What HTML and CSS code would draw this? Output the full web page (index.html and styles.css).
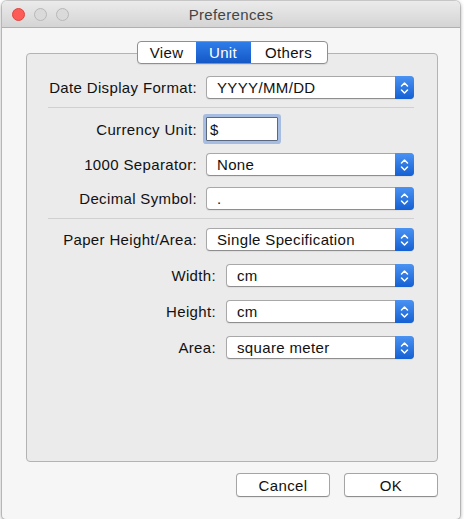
FILE: index.html
```html
<!DOCTYPE html>
<html>
<head>
<meta charset="utf-8">
<link rel="stylesheet" href="styles.css">
</head>
<body>
<div class="window">
  <div class="titlebar">
    <div class="lights"><span class="light red"></span><span class="light gray"></span><span class="light gray"></span></div>
    <div class="title">Preferences</div>
    <div></div>
  </div>
  <div class="body">
    <div class="tabs">
      <div class="tab t-view">View</div>
      <div class="tab t-unit active">Unit</div>
      <div class="tab t-others">Others</div>
    </div>
    <div class="group">
      <div class="row r-date">
        <label>Date Display Format:</label>
        <div class="popup"><span class="val">YYYY/MM/DD</span><span class="arrows"><svg width="19" height="23" viewBox="0 0 19 23"><path d="M6.5 10 L9.5 7 L12.5 10 M6.5 14 L9.5 17 L12.5 14" stroke="#fff" stroke-width="1.5" fill="none" stroke-linecap="round" stroke-linejoin="round"/></svg></span></div>
      </div>
      <div class="sep s1"></div>
      <div class="row r-cur">
        <label>Currency Unit:</label>
        <div class="field">$</div>
      </div>
      <div class="row r-thou">
        <label>1000 Separator:</label>
        <div class="popup"><span class="val">None</span><span class="arrows"><svg width="19" height="23" viewBox="0 0 19 23"><path d="M6.5 10 L9.5 7 L12.5 10 M6.5 14 L9.5 17 L12.5 14" stroke="#fff" stroke-width="1.5" fill="none" stroke-linecap="round" stroke-linejoin="round"/></svg></span></div>
      </div>
      <div class="row r-dec">
        <label>Decimal Symbol:</label>
        <div class="popup"><span class="val">.</span><span class="arrows"><svg width="19" height="23" viewBox="0 0 19 23"><path d="M6.5 10 L9.5 7 L12.5 10 M6.5 14 L9.5 17 L12.5 14" stroke="#fff" stroke-width="1.5" fill="none" stroke-linecap="round" stroke-linejoin="round"/></svg></span></div>
      </div>
      <div class="sep s2"></div>
      <div class="row r-paper">
        <label>Paper Height/Area:</label>
        <div class="popup"><span class="val">Single Specification</span><span class="arrows"><svg width="19" height="23" viewBox="0 0 19 23"><path d="M6.5 10 L9.5 7 L12.5 10 M6.5 14 L9.5 17 L12.5 14" stroke="#fff" stroke-width="1.5" fill="none" stroke-linecap="round" stroke-linejoin="round"/></svg></span></div>
      </div>
      <div class="row sub r-w">
        <label>Width:</label>
        <div class="popup"><span class="val">cm</span><span class="arrows"><svg width="19" height="23" viewBox="0 0 19 23"><path d="M6.5 10 L9.5 7 L12.5 10 M6.5 14 L9.5 17 L12.5 14" stroke="#fff" stroke-width="1.5" fill="none" stroke-linecap="round" stroke-linejoin="round"/></svg></span></div>
      </div>
      <div class="row sub r-h">
        <label>Height:</label>
        <div class="popup"><span class="val">cm</span><span class="arrows"><svg width="19" height="23" viewBox="0 0 19 23"><path d="M6.5 10 L9.5 7 L12.5 10 M6.5 14 L9.5 17 L12.5 14" stroke="#fff" stroke-width="1.5" fill="none" stroke-linecap="round" stroke-linejoin="round"/></svg></span></div>
      </div>
      <div class="row sub r-a">
        <label>Area:</label>
        <div class="popup"><span class="val">square meter</span><span class="arrows"><svg width="19" height="23" viewBox="0 0 19 23"><path d="M6.5 10 L9.5 7 L12.5 10 M6.5 14 L9.5 17 L12.5 14" stroke="#fff" stroke-width="1.5" fill="none" stroke-linecap="round" stroke-linejoin="round"/></svg></span></div>
      </div>
    </div>
    <div class="buttons">
      <button class="btn">Cancel</button>
      <button class="btn">OK</button>
    </div>
  </div>
</div>
</body>
</html>
```
FILE: styles.css
```css
html, body {
  margin: 0;
  background: #ffffff;
}
body {
  font-family: "Liberation Sans", Arial, sans-serif;
  font-size: 15px;
  letter-spacing: 0.35px;
  color: #111111;
}
.window {
  margin: 1px 0 0 2px;
  width: 458px;
  height: 518px;
  background: #f6f6f6;
  border-radius: 5px 5px 4px 4px;
  box-shadow: 0 0 0 1px rgba(0,0,0,0.12), 0 1px 4px rgba(0,0,0,0.45);
  display: flex;
  flex-direction: column;
  overflow: hidden;
}
.titlebar {
  height: 26px;
  border-bottom: 1px solid #b0b0b0;
  background: linear-gradient(#ebebeb, #d4d4d4);
  display: grid;
  grid-template-columns: 1fr auto 1fr;
  align-items: center;
}
.lights {
  display: flex;
  gap: 9px;
  padding-left: 10px;
  padding-top: 1px;
}
.light {
  width: 13px;
  height: 13px;
  border-radius: 50%;
  box-sizing: border-box;
}
.red {
  background: #fc5b57;
  border: 1px solid #e0443e;
}
.gray {
  background: #dadada;
  border: 1px solid #b8b8b8;
}
.title {
  color: #444444;
  padding-top: 1px;
}
.body {
  flex: 1;
  padding: 13px 22px 22px 24px;
  display: flex;
  flex-direction: column;
}
.tabs {
  align-self: center;
  display: flex;
  height: 23px;
  box-sizing: border-box;
  border: 1px solid #8f8f8f;
  border-radius: 4px;
  background: #fff;
  position: relative;
  z-index: 1;
  margin-bottom: -11px;
  overflow: hidden;
  box-shadow: 0 1px 1px rgba(0,0,0,0.08);
}
.tab {
  display: flex;
  align-items: center;
  justify-content: center;
}
.t-view { width: 58px; }
.t-unit { width: 55px; }
.t-others { width: 76px; }
.tab.active {
  background: linear-gradient(#2f7de9, #1458c6);
  color: #fff;
}
.group {
  height: 409px;
  box-sizing: border-box;
  border: 1px solid #b3b3b3;
  border-radius: 4px;
  background: #ebebeb;
  padding-top: 22px;
}
.row {
  display: grid;
  grid-template-columns: 170px 208px;
  column-gap: 9px;
  align-items: center;
}
.row.sub {
  grid-template-columns: 189px 188px;
  column-gap: 10px;
}
.row label {
  text-align: right;
  white-space: nowrap;
}
.sep {
  margin-left: 21px;
  width: 366px;
  height: 0;
  border-top: 1px solid #d0d0d0;
}
.s1 { margin-top: 8px; }
.r-cur { margin-top: 9px; }
.r-thou { margin-top: 12px; }
.r-dec { margin-top: 11px; }
.s2 { margin-top: 8px; }
.r-paper { margin-top: 9px; }
.r-w, .r-h, .r-a { margin-top: 13px; }
.popup {
  height: 23px;
  box-sizing: border-box;
  border: 1px solid #a8a8a8;
  border-bottom-color: #8e8e8e;
  border-radius: 4px;
  background: #fff;
  display: flex;
  align-items: center;
  box-shadow: 0 1px 1px rgba(0,0,0,0.06);
}
.val {
  flex: 1;
  padding-left: 10px;
  white-space: nowrap;
}
.arrows {
  align-self: stretch;
  width: 19px;
  margin: -1px -1px -1px 0;
  background: linear-gradient(#4a93f3, #1560d3);
  border-radius: 0 4px 4px 0;
  display: flex;
}
.field {
  justify-self: start;
  width: 72px;
  height: 24px;
  box-sizing: border-box;
  border: 1px solid #5a6880;
  background: #fff;
  padding-left: 3px;
  display: flex;
  align-items: center;
  box-shadow: 0 0 0 3px rgba(110,150,215,0.55);
  border-radius: 1px;
}
.buttons {
  margin-top: 11px;
  display: flex;
  justify-content: flex-end;
  gap: 14px;
}
.btn {
  width: 94px;
  height: 24px;
  font: inherit;
  letter-spacing: inherit;
  background: #fff;
  border: 1px solid #a5a5a5;
  border-bottom-color: #8e8e8e;
  border-radius: 4px;
  color: #111111;
  padding: 0;
  box-shadow: 0 1px 1px rgba(0,0,0,0.06);
}
```
